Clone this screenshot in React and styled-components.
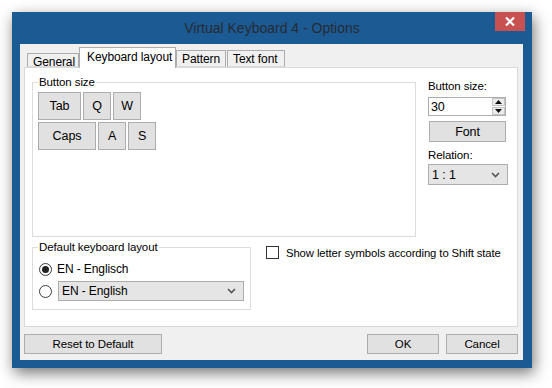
import React from "react";
import styled, { createGlobalStyle } from "styled-components";

const GlobalStyle = createGlobalStyle`
  html, body {
    margin: 0;
    padding: 0;
    background: #ffffff;
  }
  body {
    font-family: "Liberation Sans", Arial, sans-serif;
    font-size: 11px;
    letter-spacing: -0.1px;
    color: #000;
  }
`;

const Page = styled.div`
  width: 552px;
  height: 388px;
  overflow: hidden;
  padding: 12px 0 0 12px;
  box-sizing: border-box;
`;

const Window = styled.div`
  width: 520px;
  height: 356px;
  background: #1c5a94;
  display: flex;
  flex-direction: column;
  box-shadow: 2px 5px 14px rgba(0, 0, 0, 0.55);
`;

const TitleBar = styled.div`
  height: 32px;
  display: grid;
  grid-template-columns: 1fr auto 1fr;
  align-items: start;
`;

const Title = styled.div`
  grid-column: 2;
  padding-top: 8px;
  font-size: 14px;
  letter-spacing: 0;
  color: #262b31;
  white-space: nowrap;
`;

const CloseButton = styled.div`
  grid-column: 3;
  justify-self: end;
  margin-right: 7px;
  width: 30px;
  height: 19px;
  background: #c75050;
  display: flex;
  align-items: center;
  justify-content: center;
`;

const Client = styled.div`
  flex: 1;
  margin: 0 9px 8px 8px;
  background: #f0f0f0;
  display: flex;
  flex-direction: column;
  padding: 3px 5px 6px 4px;
`;

const TabStrip = styled.div`
  display: flex;
  align-items: flex-end;
  padding-left: 3px;
  height: 20px;
  position: relative;
  z-index: 1;
`;

const Tab = styled.div`
  box-sizing: border-box;
  width: ${(p) => p.$w}px;
  height: ${(p) => (p.$active ? 21 : p.$h || 17)}px;
  margin-left: ${(p) => p.$ml || 0}px;
  margin-bottom: ${(p) => (p.$active ? -1 : 0)}px;
  border: 1px solid #acacac;
  border-bottom: ${(p) => (p.$active ? "none" : "1px solid #d9d9d9")};
  background: ${(p) => (p.$active ? "#ffffff" : "#f0f0f0")};
  padding: ${(p) => (p.$active ? "3px 0 0 7px" : "2px 0 0 5px")};
  font-size: 12px;
  line-height: 13px;
  white-space: nowrap;
`;

const Panel = styled.div`
  flex: 1;
  background: #ffffff;
  border: 1px solid #d9d9d9;
  padding: 7px 0 0 7px;
  display: flex;
  flex-direction: column;
`;

const TopRow = styled.div`
  display: flex;
  gap: 12px;
`;

const BottomRow = styled.div`
  display: flex;
  margin-top: 3px;
`;

const Group = styled.fieldset`
  box-sizing: border-box;
  margin: 0;
  width: ${(p) => p.$w}px;
  height: ${(p) => p.$h}px;
  border: 1px solid #dcdcdc;
  padding: ${(p) => p.$pad};
  min-width: 0;
`;

const Legend = styled.legend`
  margin-left: ${(p) => p.$ml || 0}px;
  padding: 0 1px;
  line-height: 14px;
  font-size: 11.5px;
`;

const KeyRow = styled.div`
  display: flex;
  gap: 2px;
  margin-bottom: 2px;
`;

const Key = styled.div`
  box-sizing: border-box;
  width: ${(p) => p.$w}px;
  height: 28px;
  background: #e1e1e1;
  border: 1px solid #adadad;
  display: flex;
  align-items: center;
  justify-content: center;
  font-size: 12.5px;
`;

const SideColumn = styled.div`
  width: 80px;
  display: flex;
  flex-direction: column;
  padding-top: 4px;
`;

const Label = styled.div`
  line-height: 14px;
  font-size: 11.5px;
  margin-top: ${(p) => p.$mt || 0}px;
`;

const Spinner = styled.div`
  box-sizing: border-box;
  margin-top: 4px;
  width: 78px;
  height: 19px;
  border: 1px solid #abadb3;
  background: #fff;
  display: flex;
  align-items: center;
  justify-content: space-between;
  padding-left: 2px;
  font-size: 12.5px;
`;

const SpinButtons = styled.div`
  width: 13px;
  height: 17px;
  display: flex;
  flex-direction: column;
  gap: 1px;
`;

const SpinHalf = styled.div`
  flex: 1;
  background: #ececec;
  border: 1px solid #c4c4c4;
  box-sizing: border-box;
  display: flex;
  align-items: center;
  justify-content: center;
`;

const PushButton = styled.div`
  box-sizing: border-box;
  width: ${(p) => p.$w}px;
  height: ${(p) => p.$h || 20}px;
  margin-left: ${(p) => p.$ml || 0}px;
  margin-top: ${(p) => p.$mt || 0}px;
  background: #e1e1e1;
  border: 1px solid #adadad;
  display: flex;
  align-items: center;
  justify-content: center;
  font-size: ${(p) => p.$fs || 11.5}px;
`;

const Combo = styled.div`
  box-sizing: border-box;
  width: ${(p) => p.$w}px;
  height: ${(p) => p.$h}px;
  margin-top: ${(p) => p.$mt || 0}px;
  margin-left: ${(p) => p.$ml || 0}px;
  background: #e5e5e5;
  border: 1px solid #acacac;
  display: flex;
  align-items: center;
  justify-content: space-between;
  padding: 0 7px 0 3px;
  font-size: ${(p) => p.$fs || 11.5}px;
`;

const RadioRow = styled.div`
  display: flex;
  align-items: center;
  height: 22px;
`;

const Radio = styled.div`
  box-sizing: border-box;
  width: 13px;
  height: 13px;
  border-radius: 50%;
  border: 1px solid #3c3c3c;
  background: #fff;
  display: flex;
  align-items: center;
  justify-content: center;
  margin-right: 5px;
  &::after {
    content: "";
    width: 7px;
    height: 7px;
    border-radius: 50%;
    background: ${(p) => (p.$checked ? "#222" : "transparent")};
  }
`;

const RadioText = styled.span`
  font-size: 12px;
`;

const CheckRow = styled.div`
  display: flex;
  align-items: center;
  margin-left: 15px;
  margin-top: 6px;
  height: 13px;
  white-space: nowrap;
  font-size: 11.3px;
`;

const CheckBox = styled.div`
  box-sizing: border-box;
  width: 13px;
  height: 13px;
  border: 1px solid #333;
  background: #fff;
  margin-right: 7px;
`;

const ButtonBar = styled.div`
  display: flex;
  align-items: center;
  margin-top: 7px;
`;

const Spacer = styled.div`
  flex: 1;
`;

function Chevron() {
  return (
    <svg width="9" height="6" viewBox="0 0 9 6">
      <path d="M1 1 L4.5 4.5 L8 1" fill="none" stroke="#555" strokeWidth="1.6" />
    </svg>
  );
}

function Arrow({ up }) {
  return (
    <svg width="7" height="4" viewBox="0 0 7 4">
      <path d={up ? "M0 4 L3.5 0 L7 4 Z" : "M0 0 L3.5 4 L7 0 Z"} fill="#111" />
    </svg>
  );
}

function CloseGlyph() {
  return (
    <svg width="10" height="9" viewBox="0 0 10 9">
      <path d="M1 0.5 L9 8.5 M9 0.5 L1 8.5" stroke="#fff" strokeWidth="2.2" />
    </svg>
  );
}

export default function App() {
  return (
    <Page>
      <GlobalStyle />
      <Window>
        <TitleBar>
          <Title>Virtual Keyboard 4 - Options</Title>
          <CloseButton>
            <CloseGlyph />
          </CloseButton>
        </TitleBar>
        <Client>
          <TabStrip>
            <Tab $w={52} $h={14}>General</Tab>
            <Tab $w={97} $active>Keyboard layout</Tab>
            <Tab $w={50}>Pattern</Tab>
            <Tab $w={58} $ml={1}>Text font</Tab>
          </TabStrip>
          <Panel>
            <TopRow>
              <Group $w={384} $h={162} $pad="3px 5px">
                <Legend>Button size</Legend>
                <KeyRow>
                  <Key $w={43}>Tab</Key>
                  <Key $w={28}>Q</Key>
                  <Key $w={28}>W</Key>
                </KeyRow>
                <KeyRow>
                  <Key $w={58}>Caps</Key>
                  <Key $w={28}>A</Key>
                  <Key $w={28}>S</Key>
                </KeyRow>
              </Group>
              <SideColumn>
                <Label>Button size:</Label>
                <Spinner>
                  <span>30</span>
                  <SpinButtons>
                    <SpinHalf>
                      <Arrow up />
                    </SpinHalf>
                    <SpinHalf>
                      <Arrow />
                    </SpinHalf>
                  </SpinButtons>
                </Spinner>
                <PushButton $w={77} $h={21} $ml={1} $mt={5} $fs={12.5}>Font</PushButton>
                <Label $mt={6}>Relation:</Label>
                <Combo $w={80} $h={21} $mt={2} $fs={12.5}>
                  <span>1 : 1</span>
                  <Chevron />
                </Combo>
              </SideColumn>
            </TopRow>
            <BottomRow>
              <Group $w={219} $h={70} $pad="4px 5px 0 6px">
                <Legend $ml={-1}>Default keyboard layout</Legend>
                <RadioRow>
                  <Radio $checked />
                  <RadioText>EN - Englisch</RadioText>
                </RadioRow>
                <RadioRow>
                  <Radio />
                  <Combo $w={186} $h={20} $ml={1} $fs={12}>
                    <span>EN - English</span>
                    <Chevron />
                  </Combo>
                </RadioRow>
              </Group>
              <CheckRow>
                <CheckBox />
                <span>Show letter symbols according to Shift state</span>
              </CheckRow>
            </BottomRow>
          </Panel>
          <ButtonBar>
            <PushButton $w={138}>Reset to Default</PushButton>
            <Spacer />
            <PushButton $w={72}>OK</PushButton>
            <PushButton $w={72} $ml={7}>Cancel</PushButton>
          </ButtonBar>
        </Client>
      </Window>
    </Page>
  );
}
